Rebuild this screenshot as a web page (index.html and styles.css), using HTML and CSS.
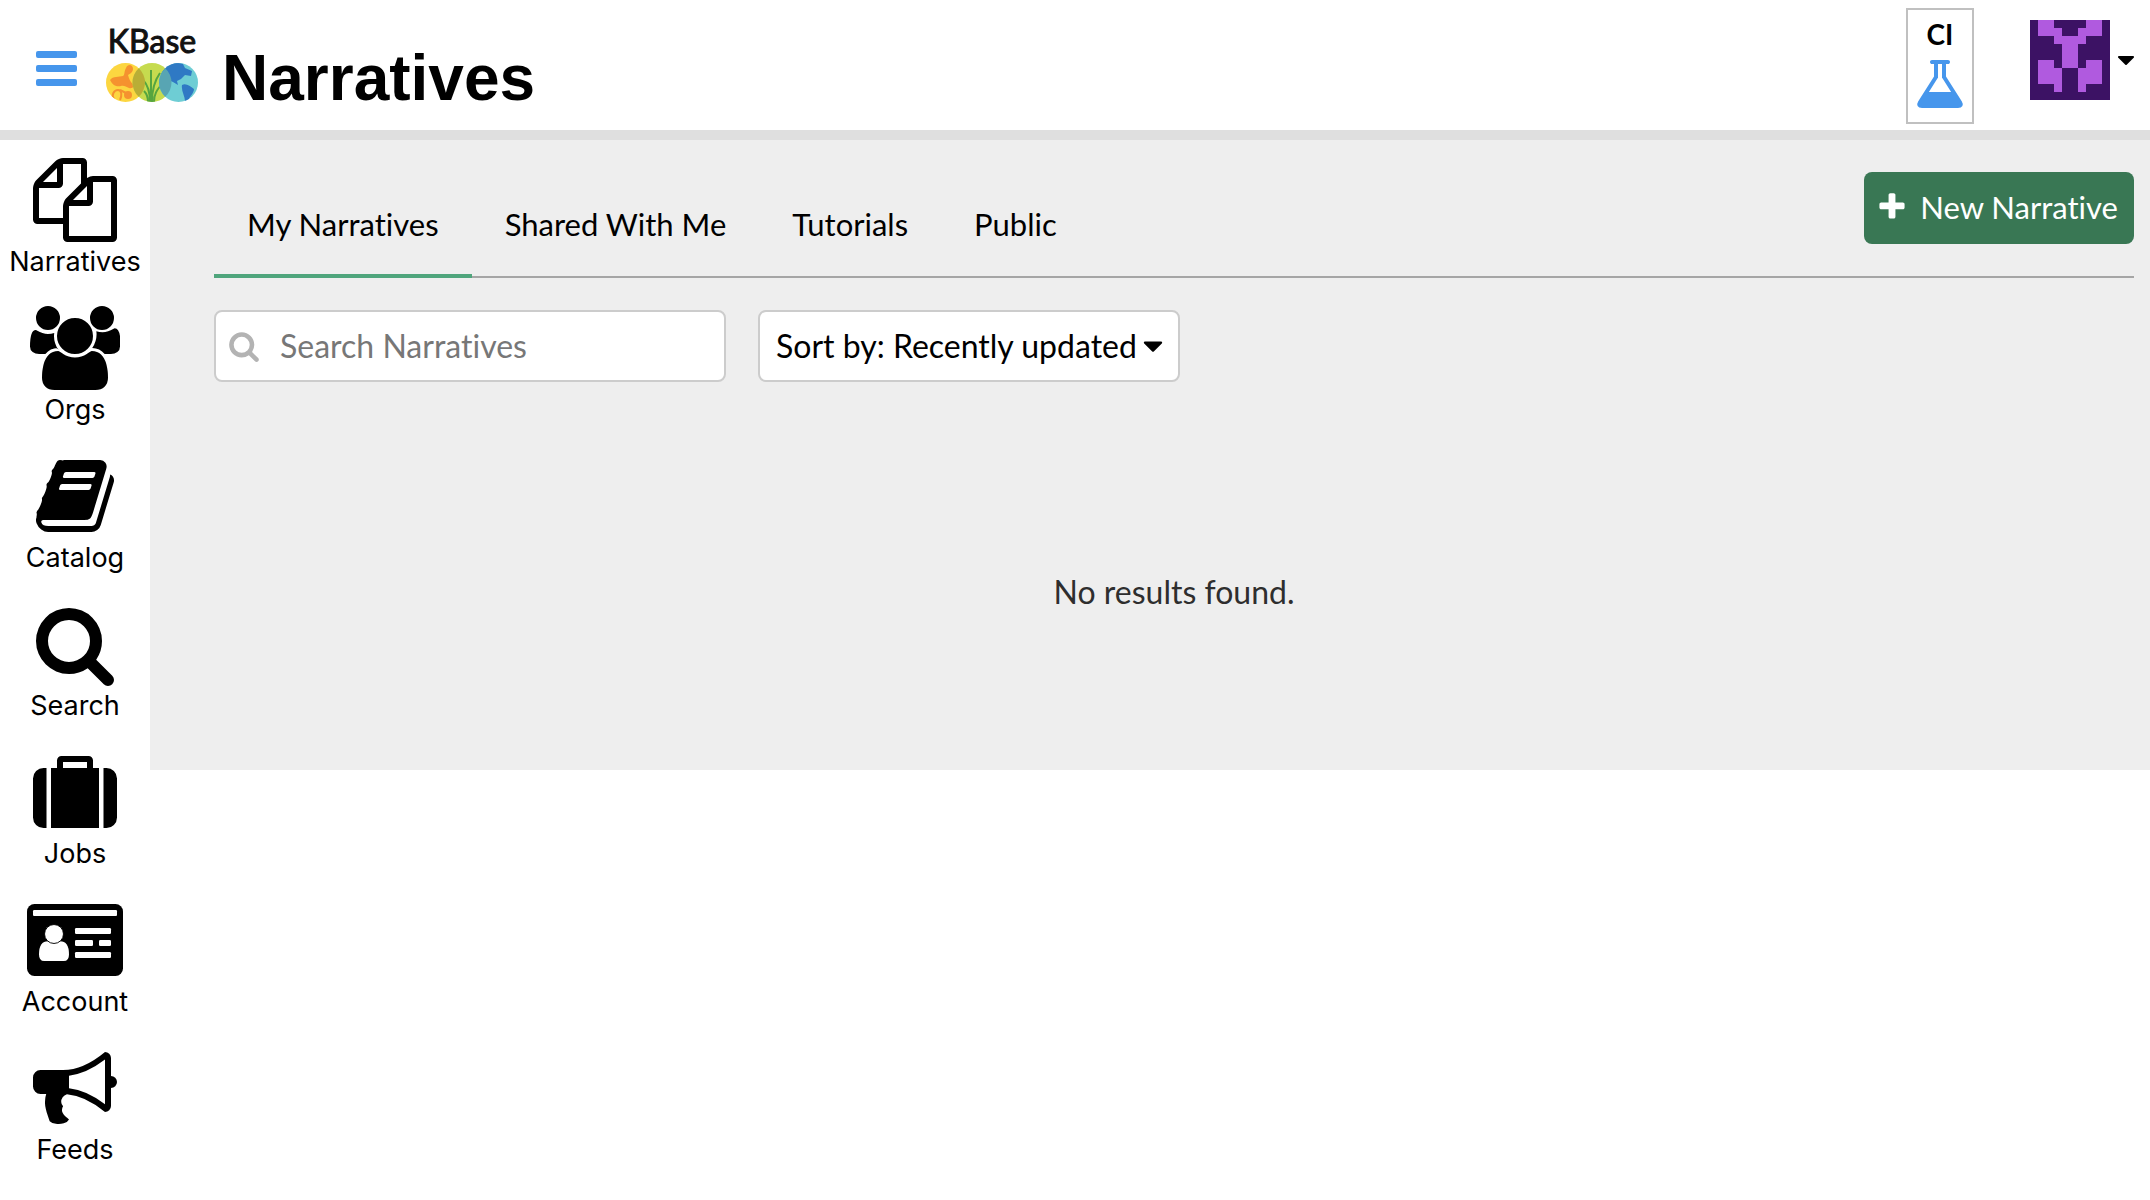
FILE: index.html
```html
<!DOCTYPE html>
<html lang="en">
<head>
<meta charset="utf-8">
<title>Narratives</title>
<meta name="viewport" content="width=device-width, initial-scale=1">
<link rel="stylesheet" href="styles.css">
</head>
<body>
<header class="topbar">
  <button class="menu-button" type="button" aria-label="Menu">
    <svg class="menu-icon" viewBox="0 0 41 35" aria-hidden="true"><rect width="41" height="7" rx="2"/><rect y="14" width="41" height="7" rx="2"/><rect y="28" width="41" height="7" rx="2"/></svg>
  </button>
  <a class="logo" href="#" aria-label="KBase home">
    <span class="logo-name">KBase</span>
    <svg class="logo-mark" viewBox="0 0 92 39" aria-hidden="true">
      <defs>
        <clipPath id="left"><circle cx="19.500" cy="19.500" r="19.500"/></clipPath>
        <clipPath id="middle"><circle cx="46" cy="19.500" r="19.500"/></clipPath>
        <clipPath id="right"><circle cx="72.500" cy="19.500" r="19.500"/></clipPath>
      </defs>
      <g clip-path="url(#left)">
        <path fill="#fcd640" d="M0 0h40v39H0z"/>
        <path fill="#f5922f" d="M4 17c3-4 9-3 13-4 2-1 1-5 3-8 2-5 7-3 7 1 0 3-3 5-5 6 1 3 2 7 5 9 2 2 0 5-4 4-3-1-5-3-8-2-4 1-8 0-11-6z"/>
        <circle cx="22" cy="32" r="4" fill="#f5922f"/>
        <path fill="none" stroke="#f5922f" stroke-width="2" d="M8 36c-3-4 0-9 4-9s4 6 2 10M14 27l6 3"/>
      </g>
      <g clip-path="url(#middle)">
        <path fill="#c6db4f" d="M26 0h40v39H26z"/>
        <path fill="none" stroke="#56a53f" stroke-width="2" d="M45 39V7M46 39c0-12 3-22 8-29M44 39c0-11-2-17-7-22M48 39c0-8 3-12 7-17M42 39c0-5-2-9-4-11"/>
      </g>
      <g clip-path="url(#right)">
        <path fill="#6ecdd4" d="M53 0h39v39H53z"/>
        <path fill="#2f79c4" d="M58 5c5-5 13-6 19-4l2 4 7 3-1 5-6-1-4 4-4 2 1 4-5-3-7-3-5-5zM76 22c4-2 8 1 12 4 0 4-4 7-6 12h-3c0-5-4-10-3-16z"/>
      </g>
      <path fill="#b9ae36" d="M32.750 5.200a19.500 19.500 0 0 1 0 28.600a19.500 19.500 0 0 1 0-28.600z"/>
      <path fill="#58a5b3" d="M59.250 5.200a19.500 19.500 0 0 1 0 28.600a19.500 19.500 0 0 1 0-28.600z"/>
    </svg>
  </a>
  <h1 class="page-title">Narratives</h1>
  <div class="environment">
    <span>CI</span>
    <svg class="flask" viewBox="0 0 1792 1792" aria-hidden="true"><path d="M1591 1448q56 89 21.500 152.500t-140.500 63.500h-1152q-106 0-140.500-63.500t21.500-152.500l503-793v-399h-64q-26 0-45-19t-19-45 19-45 45-19h512q26 0 45 19t19 45-19 45-45 19h-64v399zm-779-725l-272 429h712l-272-429-20-31v-436h-128v436z"/></svg>
  </div>
  <button class="account-button" type="button" aria-label="Account menu">
    <svg class="avatar" viewBox="0 0 10 10" shape-rendering="crispEdges" aria-hidden="true">
      <path fill="#3c1264" d="M0 0h10v10H0z"/>
      <path fill="#b05adf" d="M1 0h2v1h1v1h2V1h1V0h2v2H7v1H6v3H4V3H3V2H1zM1 5h2v1h1v3H3V8H1zM7 5h2v3H7v1H6V6h1z"/>
    </svg>
    <svg class="account-caret" viewBox="0 0 1792 1792" aria-hidden="true"><path d="M1408 704q0 26-19 45l-448 448q-19 19-45 19t-45-19l-448-448q-19-19-19-45t19-45 45-19h896q26 0 45 19t19 45z"/></svg>
  </button>
</header>

<div class="shell">
  <nav class="sidebar" aria-label="Main">
    <a href="#"><svg viewBox="0 0 1792 1792" aria-hidden="true"><path d="M1696 384q40 0 68 28t28 68v1216q0 40-28 68t-68 28h-960q-40 0-68-28t-28-68v-288h-544q-40 0-68-28t-28-68v-672q0-40 20-88t48-76l408-408q28-28 76-48t88-20h416q40 0 68 28t28 68v328q68-40 128-40h416zm-544 213l-299 299h299v-299zm-640-384l-299 299h299v-299zm196 647l316-316v-416h-384v416q0 40-28 68t-68 28h-416v640h512v-256q0-40 20-88t48-76zm956 804v-1152h-384v416q0 40-28 68t-68 28h-416v640h896z"/></svg>Narratives</a>
    <a href="#"><svg viewBox="0 0 1920 1792" aria-hidden="true"><path d="M593 896q-162 5-265 128h-134q-82 0-138-40.500t-56-118.500q0-353 124-353 6 0 43.500 21t97.500 42.500 119 21.500q67 0 133-23-5 37-5 66 0 159 93 294zm1071 637q0 120-73 189.500t-194 69.500h-874q-121 0-194-69.500t-73-189.500q0-53 3.500-103.500t14-109 26.500-108.500 43-97.500 62-81 85.500-53.500 111.500-20q10 0 43 21.500t73 48 107 48 135 21.500 135-21.500 107-48 73-48 43-21.500q61 0 111.500 20t85.500 53.500 62 81 43 97.500 26.500 108.500 14 109 3.500 103.500zm-1024-1277q0 106-75 181t-181 75-181-75-75-181 75-181 181-75 181 75 75 181zm704 384q0 159-112.500 271.500t-271.500 112.500-271.500-112.500-112.500-271.500 112.500-271.500 271.500-112.500 271.500 112.500 112.500 271.500zm576 225q0 78-56 118.500t-138 40.500h-134q-103-123-265-128 93-135 93-294 0-29-5-66 66 23 133 23 59 0 119-21.500t97.500-42.500 43.500-21q124 0 124 353zm-128-609q0 106-75 181t-181 75-181-75-75-181 75-181 181-75 181 75 75 181z"/></svg>Orgs</a>
    <a href="#"><svg viewBox="0 0 1792 1792" aria-hidden="true"><path d="M1703 478q40 57 18 129l-275 906q-19 64-76.500 107.500t-122.500 43.500h-923q-77 0-148.500-53.500t-99.500-131.500q-24-67-2-127 0-4 3-27t4-37q1-8-3-21.500t-3-19.500q2-11 8-21t16.500-23.500 16.500-23.500q23-38 45-91.500t30-91.500q3-10 .5-30t-.5-28q3-11 17-28t17-23q21-36 42-92t25-90q1-9-2.500-32t.5-28q4-13 22-30.500t22-22.500q19-26 42.500-84.500t27.500-96.500q1-8-3-25.500t-2-26.500q2-8 9-18t18-23 17-21q8-12 16.500-30.500t15-35 16-36 19.500-32 26.500-23.500 36-11.500 47.500 5.500l-1 3q38-9 51-9h761q74 0 114 56t18 130l-274 906q-36 119-71.500 153.500t-128.500 34.500h-869q-27 0-38 15-11 16-1 43 24 70 144 70h923q29 0 56-15.500t35-41.500l300-987q7-22 5-57 38 15 59 43zm-1064 2q-4 13 2 22.500t20 9.500h608q13 0 25.500-9.500t16.500-22.500l21-64q4-13-2-22.500t-20-9.500h-608q-13 0-25.500 9.500t-16.500 22.500zm-83 256q-4 13 2 22.500t20 9.500h608q13 0 25.500-9.500t16.500-22.500l21-64q4-13-2-22.500t-20-9.500h-608q-13 0-25.500 9.500t-16.500 22.500z"/></svg>Catalog</a>
    <a href="#"><svg viewBox="0 0 1792 1792" aria-hidden="true"><path id="magnifier" d="M1216 832q0-185-131.500-316.500t-316.500-131.500-316.500 131.500-131.500 316.500 131.500 316.500 316.500 131.500 316.500-131.500 131.500-316.500zm512 832q0 52-38 90t-90 38q-54 0-90-38l-343-342q-179 124-399 124-143 0-273.500-55.500t-225-150-150-225-55.500-273.500 55.500-273.500 150-225 225-150 273.500-55.500 273.500 55.500 225 150 150 225 55.500 273.500q0 220-124 399l343 343q37 37 37 90z"/></svg>Search</a>
    <a href="#"><svg viewBox="0 0 1792 1792" aria-hidden="true"><path d="M640 384h512v-128h-512v128zm-352 0v1280h-64q-92 0-158-66t-66-158v-832q0-92 66-158t158-66h64zm1120 0v1280h-1024v-1280h128v-160q0-40 28-68t68-28h576q40 0 68 28t28 68v160h128zm384 224v832q0 92-66 158t-158 66h-64v-1280h64q92 0 158 66t66 158z"/></svg>Jobs</a>
    <a href="#"><svg viewBox="0 0 2048 1792" aria-hidden="true"><rect y="128" width="2048" height="1536" rx="160"/><g fill="#fff"><rect x="128" y="256" width="1792" height="128" rx="24"/><path d="M448 924q-192 0-192 280 0 140 110 140h420q110 0 110-140 0-280-192-280z"/><circle cx="576" cy="768" r="202" stroke="#000" stroke-width="20"/><rect x="1024" y="640" width="768" height="128" rx="28"/><rect x="1024" y="896" width="384" height="128" rx="28"/><rect x="1536" y="896" width="256" height="128" rx="28"/><rect x="1024" y="1152" width="768" height="128" rx="28"/></g></svg>Account</a>
    <a href="#"><svg viewBox="0 0 1792 1792" aria-hidden="true"><path d="M1664 640q53 0 90.500 37.500t37.500 90.500-37.500 90.500-90.500 37.500v384q0 52-38 90t-90 38q-417-347-812-380-58 19-91 66t-31 100.500 40 92.500q-20 33-23 65.500t6 58 33.500 55 48 50 61.500 50.500q-29 58-111.500 83t-168.500 11.500-132-55.500q-7-23-29.500-87.500t-32-94.500-23-89-15-101 3.500-98.500 22-110.500h-122q-66 0-113-47t-47-113v-192q0-66 47-113t113-47h480q435 0 896-384 52 0 90 38t38 90v384zm-128 604v-954q-394 302-768 343v270q377 42 768 341z"/></svg>Feeds</a>
  </nav>

  <main class="content">
    <div class="tab-row">
      <nav class="tabs" aria-label="Narrative lists">
        <a class="tab tab-active" href="#" aria-current="page">My Narratives</a>
        <a class="tab" href="#">Shared With Me</a>
        <a class="tab" href="#">Tutorials</a>
        <a class="tab" href="#">Public</a>
      </nav>
      <button class="new-button" type="button">
        <svg viewBox="0 0 1792 1792" aria-hidden="true"><path d="M1600 736v192q0 40-28 68t-68 28h-416v416q0 40-28 68t-68 28h-192q-40 0-68-28t-28-68v-416h-416q-40 0-68-28t-28-68v-192q0-40 28-68t68-28h416v-416q0-40 28-68t68-28h192q40 0 68 28t28 68v416h416q40 0 68 28t28 68z"/></svg>
        New Narrative
      </button>
    </div>
    <form class="filters">
      <label class="search">
        <svg viewBox="0 0 1792 1792" aria-hidden="true"><use href="#magnifier"/></svg>
        <input type="text" placeholder="Search Narratives" aria-label="Search Narratives">
      </label>
      <div class="sort">
        <select aria-label="Sort order">
          <option>Sort by: Recently updated</option>
        </select>
        <svg viewBox="0 0 1792 1792" aria-hidden="true"><path d="M1408 704q0 26-19 45l-448 448q-19 19-45 19t-45-19l-448-448q-19-19-19-45t19-45 45-19h896q26 0 45 19t19 45z"/></svg>
      </div>
    </form>
    <p class="empty">No results found.</p>
  </main>
</div>
</body>
</html>
```
FILE: styles.css
```css
* {
  box-sizing: border-box;
}

body {
  margin: 0;
  background: #fff;
  color: #000;
  font: 32px/40px Lato, sans-serif;
  font-variant-ligatures: none;
}

a {
  color: inherit;
  text-decoration: none;
}

button,
input,
select {
  margin: 0;
  font: inherit;
  font-variant-ligatures: none;
  color: inherit;
}

svg {
  display: block;
  flex: none;
}

/* Top bar */

.topbar {
  display: flex;
  align-items: flex-start;
  height: 140px;
  padding: 0 16px 0 36px;
  border-bottom: 10px solid #dfdfdf;
}

.menu-button {
  margin-top: 51px;
  padding: 0;
  border: 0;
  background: none;
}

.menu-icon {
  width: 41px;
  height: 35px;
  fill: #4696ec;
}

.logo {
  display: flex;
  flex-direction: column;
  align-items: center;
  margin: 21px 0 0 29px;
}

.logo-name {
  height: 42px;
  color: #111;
  font-size: 32px;
  -webkit-text-stroke: 1px #111;
}

.logo-mark {
  width: 92px;
  height: 39px;
}

.page-title {
  flex: 1;
  margin: 42px 0 0 24px;
  font: bold 64px/72px "Liberation Sans", Arial, sans-serif;
}

.environment {
  display: flex;
  flex-direction: column;
  align-items: center;
  gap: 4px;
  width: 68px;
  height: 116px;
  margin: 8px 56px 0 0;
  padding-top: 6px;
  border: 2px solid #c0c0c0;
  font-size: 28px;
  font-weight: bold;
  line-height: 36px;
}

.flask {
  width: 56px;
  height: 56px;
  fill: #4696ec;
}

.account-button {
  display: flex;
  align-items: center;
  margin-top: 20px;
  padding: 0;
  border: 0;
  background: none;
}

.avatar {
  width: 80px;
  height: 80px;
}

.account-caret {
  width: 28px;
  height: 28px;
  margin: 0 -6px 0 2px;
}

/* Sidebar */

.shell {
  display: flex;
  align-items: flex-start;
}

.sidebar {
  flex: none;
  width: 150px;
  padding-top: 18px;
  font: 27px/40px Inter, sans-serif;
}

.sidebar a {
  display: flex;
  flex-direction: column;
  align-items: center;
  height: 148px;
}

.sidebar svg {
  height: 84px;
}

/* Main panel */

.content {
  flex: 1;
  min-width: 0;
  padding: 32px 16px 158px 64px;
  background: #eee;
}

.tab-row {
  display: flex;
  align-items: flex-start;
  justify-content: space-between;
  border-bottom: 2px solid #a5a5a5;
}

.tabs {
  display: flex;
  font-size: 31px;
}

.tab {
  margin-bottom: -2px;
  padding: 32px 33px 30px;
  border-bottom: 4px solid transparent;
}

.tab-active {
  border-bottom-color: #4fa57c;
}

.new-button {
  display: flex;
  align-items: center;
  gap: 12px;
  height: 72px;
  padding: 0 16px 2px 12px;
  border: 0;
  border-radius: 8px;
  background: #397754;
  color: #fff;
  font-size: 31px;
}

.new-button svg {
  width: 32px;
  height: 32px;
  fill: #fff;
}

.filters {
  display: flex;
  gap: 32px;
  padding-top: 32px;
}

.search {
  display: flex;
  align-items: center;
  gap: 20px;
  width: 512px;
  height: 72px;
  padding: 0 12px;
  border: 2px solid #ccc;
  border-radius: 8px;
  background: #fff;
}

.search svg {
  width: 32px;
  height: 32px;
  fill: #b3b3b3;
}

.search input {
  flex: 1;
  min-width: 0;
  padding: 0;
  border: 0;
  outline: 0;
  background: none;
}

.search input::placeholder {
  color: #777;
}

.sort {
  display: grid;
  align-items: center;
}

.sort select,
.sort svg {
  grid-area: 1 / 1;
}

.sort select {
  height: 72px;
  padding: 0 40px 0 16px;
  border: 2px solid #ccc;
  border-radius: 8px;
  appearance: none;
  background: #fff;
}

.sort svg {
  justify-self: end;
  width: 32px;
  height: 32px;
  margin-right: 11px;
  pointer-events: none;
}

.empty {
  margin: 0;
  padding-top: 190px;
  color: #2e2e2e;
  text-align: center;
}
```
